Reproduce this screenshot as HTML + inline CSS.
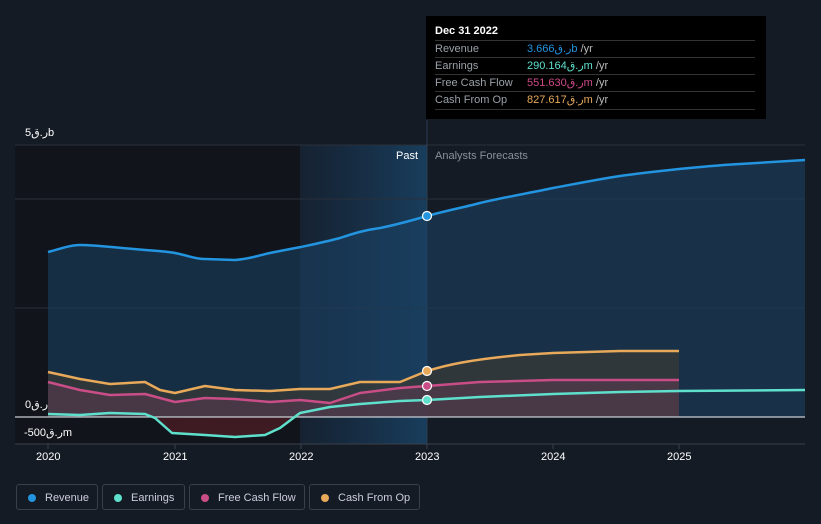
<!DOCTYPE html>
<html><head><meta charset="utf-8"><style>
body{margin:0;width:821px;height:524px;background:#151b25;overflow:hidden;font-family:"Liberation Sans","DejaVu Sans",sans-serif;position:relative}
.t{position:absolute;font-size:11px;color:#fff;white-space:nowrap}
.o{unicode-bidi:bidi-override;direction:ltr}
.tip{position:absolute;left:426px;top:16px;width:340px;height:103px;background:#000;}
.tip .h{position:absolute;left:9px;top:9px;font-size:11px;color:#fff;font-weight:bold}
.row{position:absolute;left:9px;width:320px;height:17px;border-top:1px solid #333;font-size:11px;color:#9aa0a8;line-height:17px}
.row span{position:absolute;left:92px}
.row i{font-style:normal;color:#bbb}
.lg{position:absolute;top:484px;height:26px;border:1px solid #3a3f48;border-radius:3px;font-size:11px;color:#ccd;line-height:26px;box-sizing:border-box}
.lg b{position:absolute;left:11px;top:9px;width:8px;height:8px;border-radius:50%}
.lg span{position:absolute;left:28px}
</style></head><body>
<svg width="821" height="524" style="position:absolute;left:0;top:0">
<defs>
<linearGradient id="pg" x1="0" x2="1"><stop offset="0" stop-color="#1a4a78" stop-opacity="0.15"/><stop offset="1" stop-color="#1a5a8a" stop-opacity="0.55"/></linearGradient>
</defs>
<rect x="15" y="145" width="285" height="299" fill="#11151b"/>
<rect x="300" y="145" width="127" height="299" fill="url(#pg)"/>
<g stroke="#2a303a" stroke-width="1">
<line x1="15" y1="145" x2="805" y2="145"/><line x1="15" y1="199" x2="805" y2="199"/><line x1="15" y1="308" x2="805" y2="308"/><line x1="15" y1="444" x2="805" y2="444" stroke="#3a404a"/>
</g>
<line x1="427" y1="120" x2="427" y2="444" stroke="#2c3e52"/>
<path d="M48,252 C60,249 70,245 80,245 C95,245 110,247 145,250 C160,251 170,252 175,253 C190,256 195,259 205,259 L235,260 C250,259 260,255 270,253 C285,250 290,249 301,247 C315,244 325,242 340,238 C355,233 365,230 380,228 C395,225 410,221 427,216 C445,211 465,207 480,203 C505,197 530,193 553,188 C580,183 600,179 620,176 C640,173 660,171 679,169 C700,167 720,165 740,164 L805,160 L805,417 L48,417Z" fill="#1b3f60" fill-opacity="0.6"/>
<path d="M48,372 L80,379 L110,384 L145,382 L160,390 L175,393 L205,386 L235,390 L270,391 L300,389 L330,389 L360,382 L400,382 L427,371 C450,364 470,360 520,355 L553,353 L620,351 L679,351 L679,417 L48,417Z" fill="#3b3a35" fill-opacity="0.7"/>
<path d="M48,382 L80,390 L110,395 L145,394 L175,402 L205,398 L235,399 L270,402 L300,400 L330,403 L360,393 L400,388 L427,386 L480,382 L553,380 L679,380 L679,417 L48,417Z" fill="#5a3a50" fill-opacity="0.6"/>
<path d="M155,418 L172,433 L205,435 L235,437 L265,435 L280,428 L295,417Z" fill="#4a1c24" fill-opacity="0.8"/>
<line x1="15" y1="417" x2="805" y2="417" stroke="#c8cdd4" stroke-width="1.3"/>
<g fill="none" stroke-width="2.5" stroke-linejoin="round">
<path d="M48,252 C60,249 70,245 80,245 C95,245 110,247 145,250 C160,251 170,252 175,253 C190,256 195,259 205,259 L235,260 C250,259 260,255 270,253 C285,250 290,249 301,247 C315,244 325,242 340,238 C355,233 365,230 380,228 C395,225 410,221 427,216 C445,211 465,207 480,203 C505,197 530,193 553,188 C580,183 600,179 620,176 C640,173 660,171 679,169 C700,167 720,165 740,164 L805,160" stroke="#2394df"/>
<path d="M48,372 L80,379 L110,384 L145,382 L160,390 L175,393 L205,386 L235,390 L270,391 L300,389 L330,389 L360,382 L400,382 L427,371 C450,364 470,360 520,355 L553,353 L620,351 L679,351" stroke="#e8a95a"/>
<path d="M48,382 L80,390 L110,395 L145,394 L175,402 L205,398 L235,399 L270,402 L300,400 L330,403 L360,393 L400,388 L427,386 L480,382 L553,380 L679,380" stroke="#c94d86"/>
<path d="M48,414 L80,415 L110,413 L145,414 L155,418 L172,433 L205,435 L235,437 L265,435 L280,428 L300,413 L330,407 L360,404 L400,401 L427,400 L480,397 L553,394 L620,392 L679,391 L805,390" stroke="#5ee0cc"/>
</g>
<g stroke="#fff" stroke-width="1.2">
<circle cx="427" cy="216" r="4.5" fill="#2394df"/><circle cx="427" cy="371" r="4.5" fill="#e8a95a"/><circle cx="427" cy="386" r="4.5" fill="#c94d86"/><circle cx="427" cy="400" r="4.5" fill="#5ee0cc"/>
</g>
<g stroke="#3a404a"><line x1="48" y1="444" x2="48" y2="449"/><line x1="175" y1="444" x2="175" y2="449"/><line x1="301" y1="444" x2="301" y2="449"/><line x1="427" y1="444" x2="427" y2="449"/><line x1="553" y1="444" x2="553" y2="449"/><line x1="679" y1="444" x2="679" y2="449"/></g>
</svg>
<div class="t o" style="left:25px;top:126px">5ق.رb</div>
<div class="t o" style="left:25px;top:398px">0ق.ر</div>
<div class="t o" style="left:24px;top:426px">-500ق.رm</div>
<div class="t" style="left:396px;top:150px">Past</div>
<div class="t" style="left:435px;top:150px;color:#8a9099">Analysts Forecasts</div>
<div class="t" style="left:36px;top:451px">2020</div>
<div class="t" style="left:163px;top:451px">2021</div>
<div class="t" style="left:289px;top:451px">2022</div>
<div class="t" style="left:415px;top:451px">2023</div>
<div class="t" style="left:541px;top:451px">2024</div>
<div class="t" style="left:667px;top:451px">2025</div>
<div class="tip"><div class="h">Dec 31 2022</div>
<div class="row" style="top:24px">Revenue<span><b class="o" style="font-weight:normal;color:#2394df">3.666ق.رb</b> <i>/yr</i></span></div>
<div class="row" style="top:41px">Earnings<span><b class="o" style="font-weight:normal;color:#5ee0cc">290.164ق.رm</b> <i>/yr</i></span></div>
<div class="row" style="top:58px">Free Cash Flow<span><b class="o" style="font-weight:normal;color:#d04a8a">551.630ق.رm</b> <i>/yr</i></span></div>
<div class="row" style="top:75px;border-bottom:1px solid #333">Cash From Op<span><b class="o" style="font-weight:normal;color:#e8a95a">827.617ق.رm</b> <i>/yr</i></span></div>
</div>
<div class="lg" style="left:16px;width:82px"><b style="background:#2394df"></b><span>Revenue</span></div>
<div class="lg" style="left:102px;width:83px"><b style="background:#5ee0cc"></b><span>Earnings</span></div>
<div class="lg" style="left:189px;width:116px"><b style="background:#c94d86"></b><span>Free Cash Flow</span></div>
<div class="lg" style="left:309px;width:111px"><b style="background:#e8a95a"></b><span>Cash From Op</span></div>
</body></html>
